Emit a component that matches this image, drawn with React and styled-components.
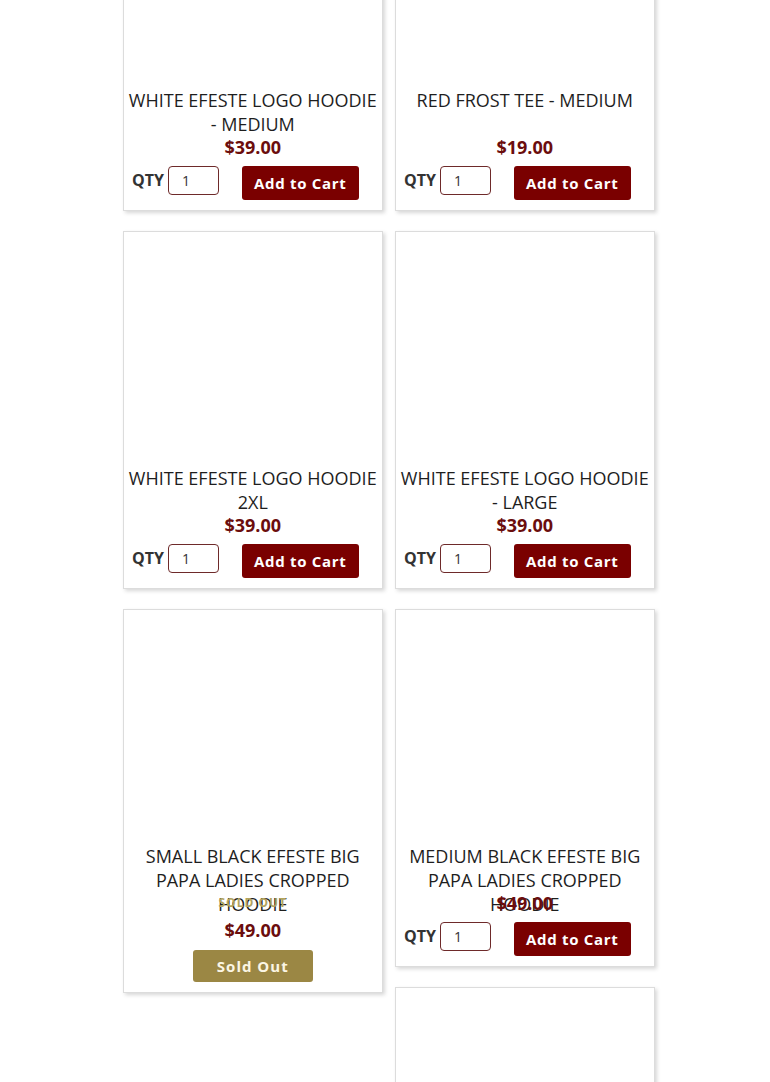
import React from "react";
import styled, { createGlobalStyle } from "styled-components";

const products = [
  { id: 1, name: "White Efeste Logo Hoodie - Medium", price: "$39.00" },
  { id: 2, name: "Red Frost Tee - Medium", price: "$19.00" },
  { id: 3, name: "White Efeste Logo Hoodie 2XL", price: "$39.00" },
  { id: 4, name: "White Efeste Logo Hoodie - Large", price: "$39.00" },
  {
    id: 5,
    name: "Small Black Efeste Big Papa Ladies Cropped Hoodie",
    price: "$49.00",
    soldOut: true,
  },
  {
    id: 6,
    name: "Medium Black Efeste Big Papa Ladies Cropped Hoodie",
    price: "$49.00",
  },
  {
    id: 7,
    name: "Large Black Efeste Big Papa Ladies Cropped Hoodie",
    price: "$49.00",
  },
];

const ProductCard = ({ product }) => (
  <Card>
    <ImageArea />
    <Title>{product.name}</Title>
    {product.soldOut && <SoldLabel>Sold Out</SoldLabel>}
    <Price>{product.price}</Price>
    {product.soldOut ? (
      <SoldOutButton type="button">Sold Out</SoldOutButton>
    ) : (
      <QtyRow>
        <QtyLabel>QTY</QtyLabel>
        <QtyInput type="text" defaultValue="1" />
        <CartButton type="button">Add to Cart</CartButton>
      </QtyRow>
    )}
  </Card>
);

const App = () => {
  return (
    <>
      <GlobalStyle />
      <Grid>
        {products.map((p) => (
          <ProductCard key={p.id} product={p} />
        ))}
      </Grid>
    </>
  );
};

export default App;

const GlobalStyle = createGlobalStyle`
  body {
    margin: 0;
    background: #fff;
    font-family: "Open Sans", "Liberation Sans", sans-serif;
    overflow: hidden;
  }
`;

const Grid = styled.div`
  width: 544px;
  margin: -147px 0 0 123px;

  &::after {
    content: "";
    display: block;
    clear: both;
  }
`;

const Card = styled.div`
  float: left;
  box-sizing: border-box;
  width: 259.5px;
  margin: 0 12.5px 20px 0;
  padding-bottom: 10px;
  background: #fff;
  border: 1px solid #dcdcdc;
  box-shadow: 2px 2px 4px rgba(0, 0, 0, 0.16);
  text-align: center;
`;

const ImageArea = styled.div`
  height: 234px;
`;

const Title = styled.h3`
  height: 48px;
  margin: 0;
  padding: 0 4px;
  font-size: 18px;
  font-weight: 400;
  line-height: 24px;
  color: #1e1e1e;
  text-transform: uppercase;
`;

const SoldLabel = styled.div`
  height: 22px;
  margin-bottom: 5px;
  font-size: 12px;
  font-weight: 700;
  line-height: 22px;
  letter-spacing: 1px;
  color: #b3a45e;
  text-transform: uppercase;
`;

const Price = styled.div`
  position: relative;
  font-size: 18px;
  font-weight: 700;
  line-height: 22px;
  color: #6b0d0d;
`;

const QtyRow = styled.div`
  display: flex;
  align-items: flex-start;
  margin-top: 8px;
  padding-left: 8px;
`;

const QtyLabel = styled.span`
  margin: 3px 4px 0 0;
  font-size: 16px;
  font-weight: 700;
  line-height: 22px;
  color: #333;
`;

const QtyInput = styled.input`
  box-sizing: border-box;
  width: 51px;
  height: 29px;
  padding: 0 0 0 13px;
  border: 1px solid #6e2a2a;
  border-radius: 4px;
  font-family: "Open Sans", "Liberation Sans", sans-serif;
  font-size: 14px;
  color: #333;
  outline: none;
`;

const CartButton = styled.button`
  box-sizing: border-box;
  height: 34px;
  margin-left: 23px;
  padding: 0 12px 1px;
  border: none;
  border-radius: 3px;
  background: #7a0000;
  color: #fff;
  font-family: "Open Sans", "Liberation Sans", sans-serif;
  font-size: 15px;
  font-weight: 700;
  letter-spacing: 0.7px;
  cursor: pointer;
`;

const SoldOutButton = styled.button`
  box-sizing: border-box;
  width: 120px;
  height: 32px;
  margin-top: 9px;
  border: none;
  border-radius: 3px;
  background: #9b8744;
  color: #fbf6e4;
  font-family: "Open Sans", "Liberation Sans", sans-serif;
  font-size: 15px;
  font-weight: 700;
  letter-spacing: 1px;
`;
